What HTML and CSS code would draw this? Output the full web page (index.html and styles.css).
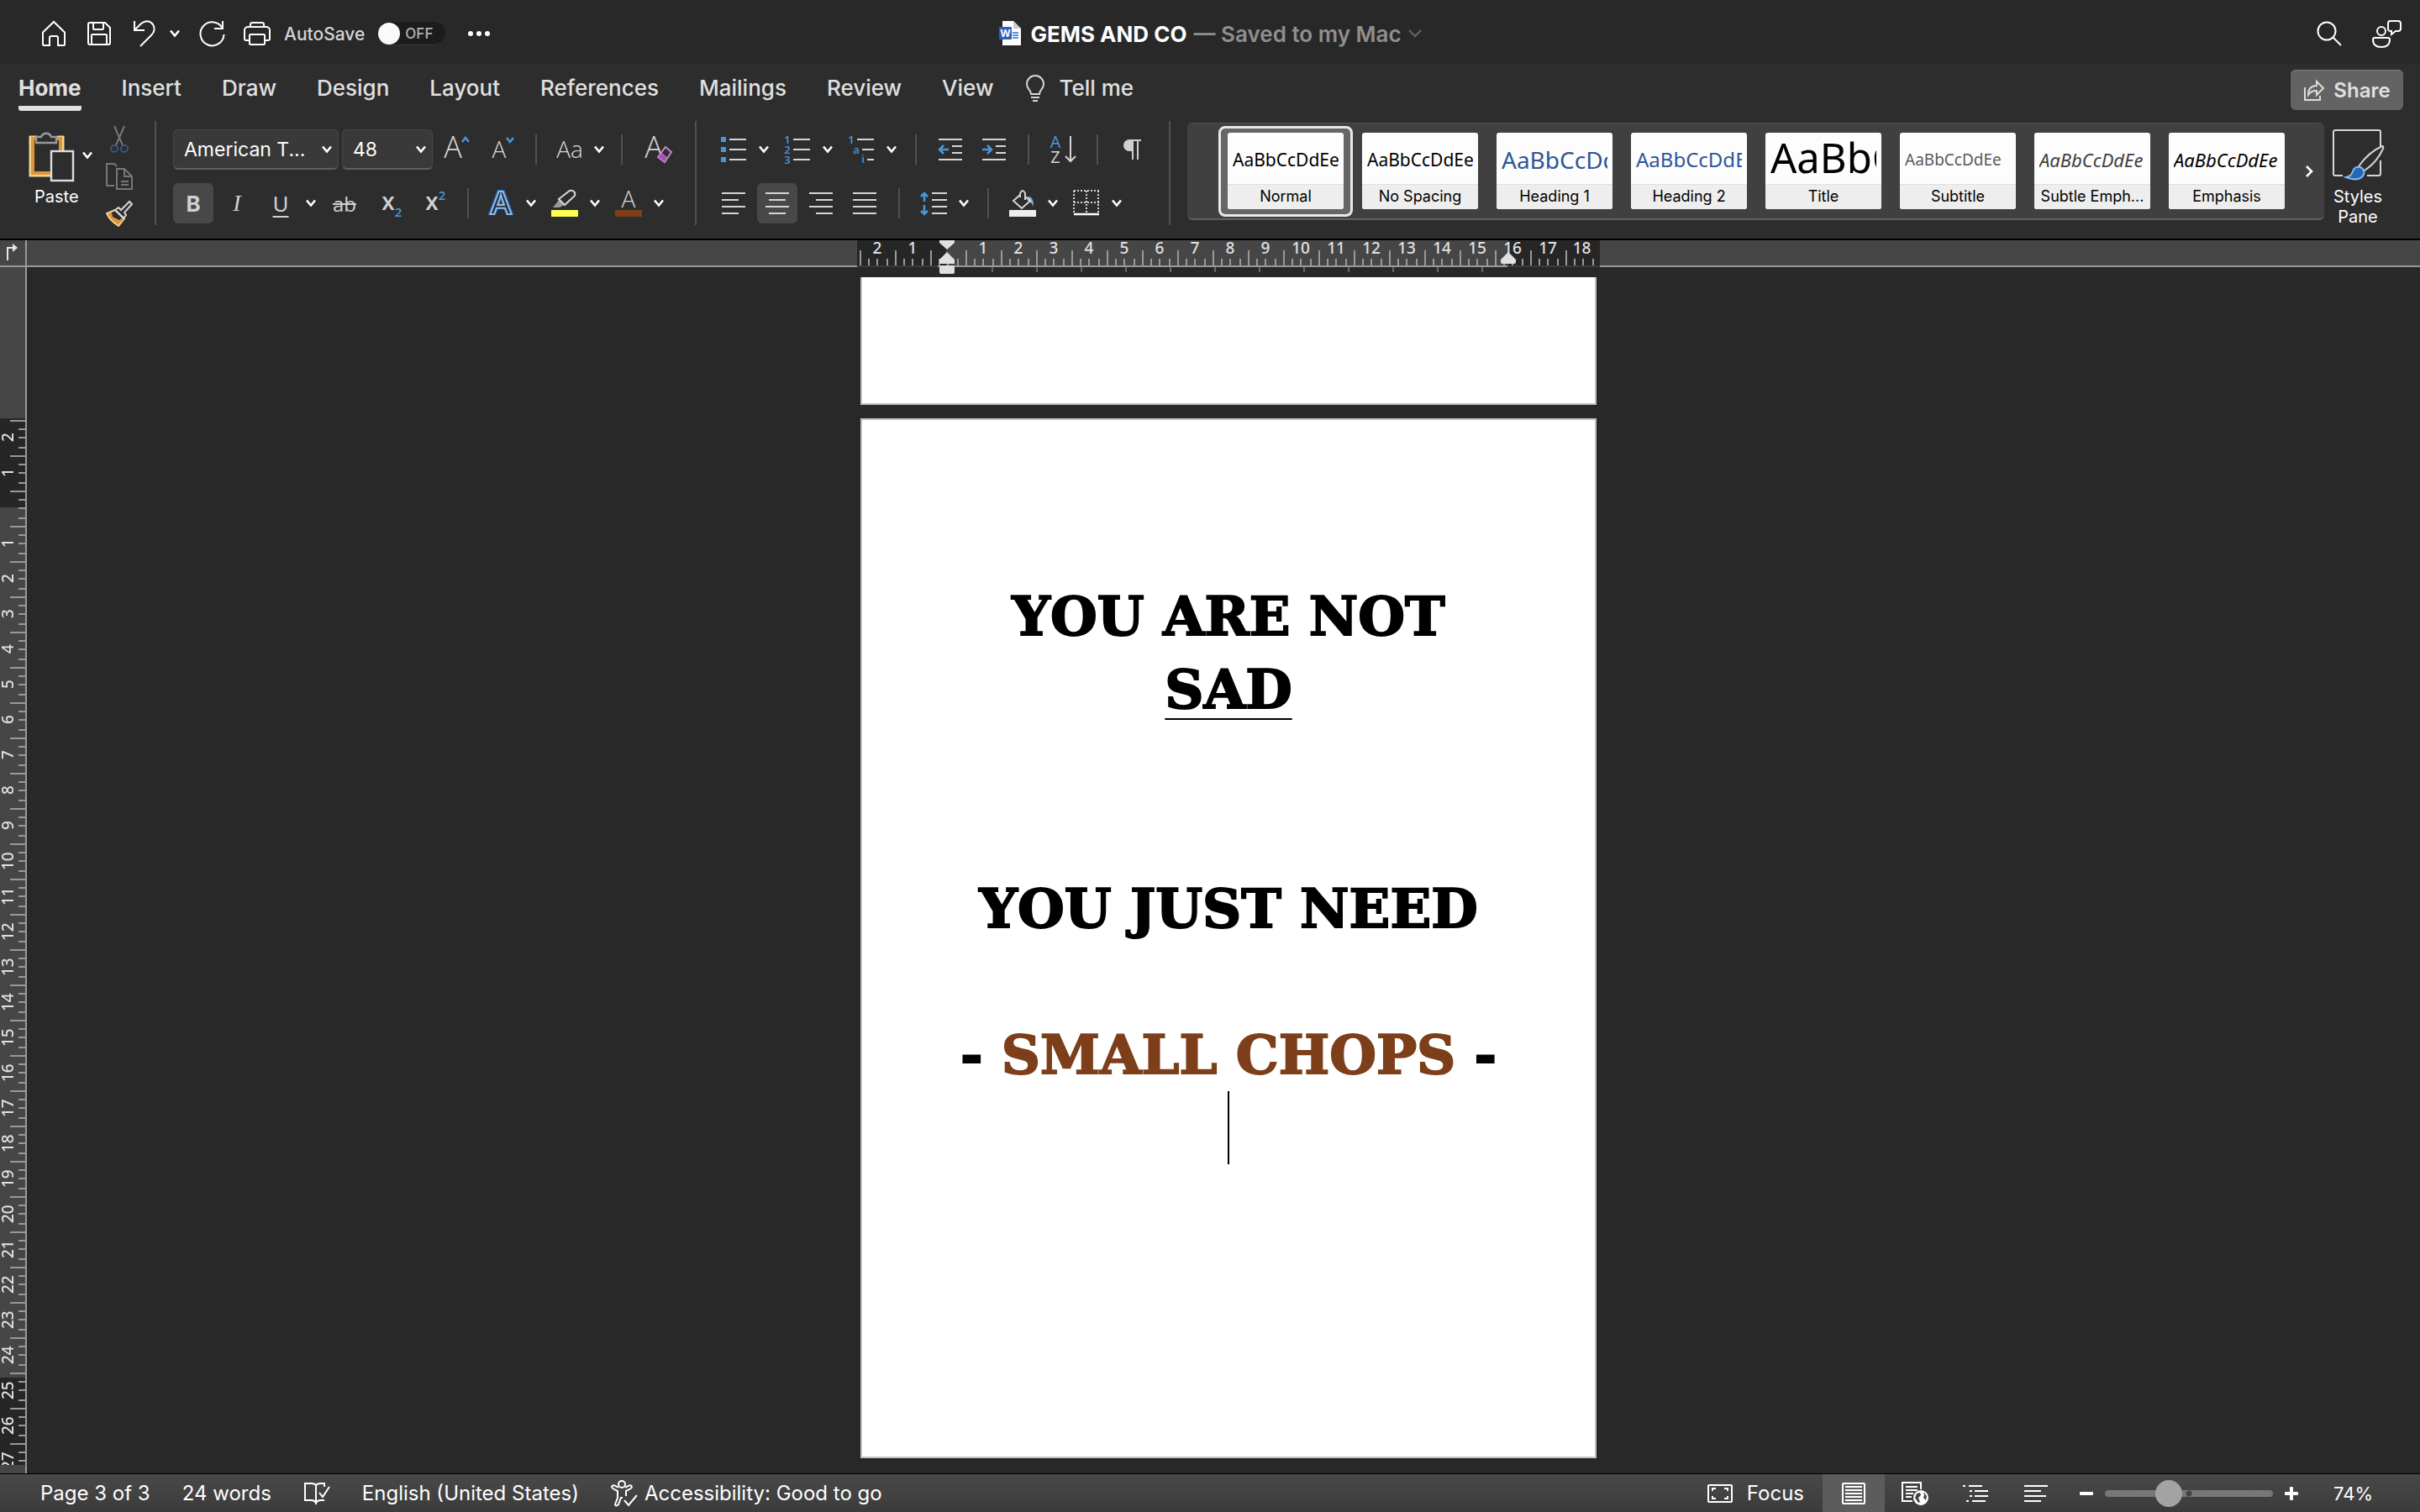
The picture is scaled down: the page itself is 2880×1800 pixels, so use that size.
FILE: index.html
```html
<!DOCTYPE html>
<html lang="en">
<head>
<meta charset="utf-8">
<title>GEMS AND CO</title>
<link rel="stylesheet" href="styles.css">
</head>
<body>
<svg class="defs" aria-hidden="true">
  <symbol id="chev" viewBox="0 0 12 12"><path d="M1 2.500L6 8.500L11 2.500" fill="none" stroke="currentColor" stroke-width="2.600"/></symbol>
</svg>

<header class="titlebar">
  <div class="quick">
    <button class="q" aria-label="Home"><svg width="32" height="32" viewBox="0 0 32 32" class="ln"><path d="M3 14.500L16 2L29 14.500V29a1 1 0 0 1-1 1H21V21a2 2 0 0 0-2-2h-6a2 2 0 0 0-2 2v9H4a1 1 0 0 1-1-1z"/></svg></button>
    <button class="q" aria-label="Save"><svg width="32" height="32" viewBox="0 0 32 32" class="ln"><path d="M5 3h18l6 6v18a2 2 0 0 1-2 2H5a2 2 0 0 1-2-2V5a2 2 0 0 1 2-2zM9 3v7a1 1 0 0 0 1 1h10a1 1 0 0 0 1-1V3M7 29V18a1 1 0 0 1 1-1h16a1 1 0 0 1 1 1v11"/></svg></button>
    <button class="q undo" aria-label="Undo"><svg width="32" height="32" viewBox="0 0 32 32" class="ln"><path d="M4 1v11h12M4 12L12 4q8-6 14 1q4 7-2 13L11 31"/></svg><svg width="12" height="12"><use href="#chev"/></svg></button>
    <button class="q" aria-label="Redo"><svg width="32" height="32" viewBox="0 0 32 32" class="ln"><path d="M29 1v9H19M29 10A14 14 0 1 0 30.500 17"/></svg></button>
    <button class="q" aria-label="Print"><svg width="32" height="32" viewBox="0 0 32 32" class="ln"><path d="M8 8V5a2 2 0 0 1 2-2h12a2 2 0 0 1 2 2v3M7 24H3a2 2 0 0 1-2-2V12a4 4 0 0 1 4-4h22a4 4 0 0 1 4 4v10a2 2 0 0 1-2 2h-4M7 18a1 1 0 0 1 1-1h16a1 1 0 0 1 1 1v10a1 1 0 0 1-1 1H8a1 1 0 0 1-1-1z"/></svg></button>
    <label class="autosave">AutoSave<span class="switch"><input type="checkbox" aria-label="AutoSave"><span>OFF</span></span></label>
    <button class="q more" aria-label="More"><svg width="28" height="8" viewBox="0 0 28 8" fill="#fff"><circle cx="4" cy="4" r="3"/><circle cx="14" cy="4" r="3"/><circle cx="24" cy="4" r="3"/></svg></button>
  </div>
  <button class="doc-title">
    <svg width="28" height="30" viewBox="0 0 28 30"><path d="M5 0h13l9 9v20H5z" fill="#fff"/><path d="M18 0v9h9z" fill="#ccc"/><path d="M17 14h7M17 17h7M17 20h7" stroke="#2b6fd0" stroke-width="1.500"/><rect x="1" y="7" width="15" height="15" rx="1" fill="#2c5fc0"/><text x="8.500" y="19" class="w-logo">W</text></svg>
    <strong>GEMS AND CO</strong><span>— Saved to my Mac</span><svg width="16" height="12" viewBox="0 0 16 12" fill="none" stroke="#666" stroke-width="2"><path d="M1 2l7 7 7-7"/></svg>
  </button>
  <div class="title-right">
    <button class="q" aria-label="Search"><svg width="32" height="32" viewBox="0 0 32 32" class="ln"><circle cx="13" cy="13" r="10.500"/><path d="M20.500 20.500L30 30"/></svg></button>
    <button class="q" aria-label="Presence"><svg width="36" height="34" viewBox="0 0 36 34" class="ln"><circle cx="12" cy="14" r="5"/><path d="M4 22h16a2 2 0 0 1 2 2c0 6-4 9-10 9S2 30 2 24a2 2 0 0 1 2-2zM22 2h10a3 3 0 0 1 3 3v6a3 3 0 0 1-3 3h-3l-5 4v-4a3 3 0 0 1-4-3V5a3 3 0 0 1 2-3z"/></svg></button>
  </div>
</header>

<nav class="tabs">
  <a href="#" class="active">Home</a><a href="#">Insert</a><a href="#">Draw</a><a href="#">Design</a><a href="#">Layout</a><a href="#">References</a><a href="#">Mailings</a><a href="#">Review</a><a href="#">View</a>
  <a href="#" class="tell"><svg width="24" height="32" viewBox="0 0 24 32" fill="none" stroke="#d6d6d6" stroke-width="2"><path d="M7 23c0-5-5-6-5-12a10 10 0 0 1 20 0c0 6-5 7-5 12zM7 27h10M9 31h6"/></svg>Tell me</a>
  <button class="share"><svg width="26" height="26" viewBox="0 0 26 26" fill="none" stroke="#dcdcdc" stroke-width="2"><path d="M2 9v15h18v-5M6 18c0-8 4-11 10-11V2l8 8-8 8v-5c-5 0-7 1-10 5z"/></svg>Share</button>
</nav>

<section class="ribbon">
  <div class="clip">
    <button class="paste"><span class="paste-icon"><svg width="54" height="62" viewBox="0 0 54 62"><path d="M10 9H2v46h24M34 9h7v16" fill="none" stroke="#f3d58f" stroke-width="3"/><path d="M10 11H5v41h21M34 11h4v14" fill="none" stroke="#de9439" stroke-width="4"/><path d="M9 16V9h6a6.500 7 0 0 1 12 0h6v7z" fill="#2d2d2d" stroke="#999" stroke-width="2.400"/><rect x="27" y="26" width="26" height="35" fill="#2d2d2d" stroke="#ddd" stroke-width="2.400"/></svg><svg width="12" height="12"><use href="#chev"/></svg></span><span class="paste-label">Paste</span></button>
    <div class="clip-col">
      <button class="mini" aria-label="Cut"><svg width="32" height="32" viewBox="0 0 32 32" fill="none" stroke-width="2"><path d="M10 0L20 23M22 0L12 23" stroke="#777"/><circle cx="10" cy="27" r="4" stroke="#355a7c"/><circle cx="22" cy="27" r="4" stroke="#355a7c"/></svg></button>
      <button class="mini" aria-label="Copy"><svg width="32" height="32" viewBox="0 0 32 32" fill="none" stroke="#777" stroke-width="2"><path d="M10 27H1V1h9l3 3M13 7h9l9 9v15H13zM22 7v9h9M18 22h9M18 26h9"/></svg></button>
      <button class="mini" aria-label="Format painter"><svg width="32" height="32" viewBox="0 0 32 32" fill="none" stroke-width="2"><path d="M8 20l8 4 5-4-6 11Q4 24 1 16l6-1z" fill="#de9439"/><path d="M11 12l11 10-7 9Q4 24 1 16z" stroke="#f3d58f"/><path d="M11 12l4-3 3 3L28 2l3 3-9 10 2 3-3 4z" stroke="#d6d6d6"/></svg></button>
    </div>
  </div>
  <div class="divider"></div>

  <div class="group font">
    <div class="row">
      <span class="combo family"><select aria-label="Font"><option>American T...</option></select><svg width="12" height="12"><use href="#chev"/></svg></span>
      <span class="combo size"><select aria-label="Font size"><option>48</option></select><svg width="12" height="12"><use href="#chev"/></svg></span>
      <button class="tool" aria-label="Grow font"><svg width="32" height="32" viewBox="0 0 32 32"><text x="12" y="26" class="glyph big">A</text><path d="M23 7l4-5 4 5" class="b"/></svg></button>
      <button class="tool spaced" aria-label="Shrink font"><svg width="32" height="32" viewBox="0 0 32 32"><text x="11" y="26" class="glyph mid">A</text><path d="M20 2l4 5 4-5" class="b"/></svg></button>
      <i class="rule"></i>
      <button class="menu" aria-label="Change case"><svg width="32" height="32" viewBox="0 0 32 32"><text x="17" y="26" class="glyph mid">Aa</text></svg><svg width="12" height="12"><use href="#chev"/></svg></button>
      <i class="rule"></i>
      <button class="tool spaced" aria-label="Clear formatting"><svg width="32" height="32" viewBox="0 0 32 32"><text x="11" y="26" class="glyph big">A</text><path d="M25 13l7 6-8 12-8-6z" fill="#2d2d2d" stroke="#c586d4" stroke-width="2"/><path d="M20 20l7 6-3 5-8-6z" fill="#a54fb8" stroke="#c586d4"/></svg></button>
    </div>
    <div class="row">
      <button class="tool on bold" aria-pressed="true">B</button>
      <button class="tool italic">I</button>
      <button class="menu"><span class="ul">U</span><svg width="12" height="12"><use href="#chev"/></svg></button>
      <button class="tool strike">ab</button>
      <button class="tool spaced" aria-label="Subscript"><svg width="32" height="32" viewBox="0 0 32 32"><text x="12" y="24" class="xx">x</text><text x="24" y="32" class="blue">2</text></svg></button>
      <button class="tool" aria-label="Superscript"><svg width="32" height="32" viewBox="0 0 32 32"><text x="12" y="24" class="xx">x</text><text x="24" y="12" class="blue">2</text></svg></button>
      <i class="rule"></i>
      <button class="menu" aria-label="Text effects"><svg width="32" height="32" viewBox="0 0 32 32"><text x="16" y="29" class="fx">A</text></svg><svg width="12" height="12"><use href="#chev"/></svg></button>
      <button class="menu" aria-label="Highlight"><svg width="32" height="32" viewBox="0 0 32 32"><path d="M2 21l7-9 6 6-5 3z" fill="#999"/><path d="M9 11L22 1q3-1 5 1t1 5L16 18z" fill="none" stroke="#d6d6d6" stroke-width="2"/><path d="M0 24h32v8H0z" fill="#ffff4f"/></svg><svg width="12" height="12"><use href="#chev"/></svg></button>
      <button class="menu" aria-label="Font color"><svg width="32" height="32" viewBox="0 0 32 32"><text x="16" y="21" class="glyph mid">A</text><path d="M0 24h32v8H0z" fill="#7d3f1a"/></svg><svg width="12" height="12"><use href="#chev"/></svg></button>
    </div>
  </div>
  <div class="divider"></div>

  <div class="group">
    <div class="row">
      <button class="menu" aria-label="Bullets"><svg width="32" height="32" viewBox="0 0 32 32"><path d="M1 1h6v6H1zM1 13h6v6H1zM1 25h6v6H1z" fill="#4a97d8"/><path d="M11 4h20M11 16h20M11 28h20" class="g"/></svg><svg width="12" height="12"><use href="#chev"/></svg></button>
      <button class="menu" aria-label="Numbering"><svg width="32" height="32" viewBox="0 0 32 32"><text x="4" y="9" class="num">1</text><text x="4" y="21" class="num">2</text><text x="4" y="33" class="num">3</text><path d="M11 4h20M11 16h20M11 28h20" class="g"/></svg><svg width="12" height="12"><use href="#chev"/></svg></button>
      <button class="menu" aria-label="Multilevel list"><svg width="32" height="32" viewBox="0 0 32 32"><text x="4" y="9" class="num">1</text><text x="10" y="21" class="num">a</text><text x="18" y="32" class="num">i</text><path d="M11 4h20M17 16h14M23 28h8" class="g"/></svg><svg width="12" height="12"><use href="#chev"/></svg></button>
      <i class="rule"></i>
      <button class="tool" aria-label="Decrease indent"><svg width="32" height="32" viewBox="0 0 32 32"><path d="M2 4h28M18 12h12M18 20h12M2 28h28" class="g"/><path d="M14 16H3M8 11l-5 5 5 5" class="b"/></svg></button>
      <button class="tool" aria-label="Increase indent"><svg width="32" height="32" viewBox="0 0 32 32"><path d="M2 4h28M18 12h12M18 20h12M2 28h28" class="g"/><path d="M2 16h11M8 11l5 5-5 5" class="b"/></svg></button>
      <i class="rule"></i>
      <button class="tool" aria-label="Sort"><svg width="34" height="34" viewBox="0 0 34 34"><text x="8" y="15" class="sort sa">A</text><text x="8" y="33" class="sort">Z</text><path d="M26 1v30M20 25l6 6 6-6" class="g"/></svg></button>
      <i class="rule"></i>
      <button class="tool" aria-label="Show formatting marks"><svg width="32" height="32" viewBox="0 0 32 32"><path d="M13 4h14v2h-3v22h-2V6h-4v22h-2V18h-3a7 7 0 0 1 0-14z" fill="#d0d0d0"/></svg></button>
    </div>
    <div class="row">
      <button class="tool" aria-label="Align left"><svg width="32" height="32" viewBox="0 0 32 32"><path d="M2 4h28M2 12h20M2 20h28M2 28h20" class="g"/></svg></button>
      <button class="tool on" aria-label="Center"><svg width="32" height="32" viewBox="0 0 32 32"><path d="M2 4h28M6 12h20M2 20h28M6 28h20" class="g"/></svg></button>
      <button class="tool" aria-label="Align right"><svg width="32" height="32" viewBox="0 0 32 32"><path d="M2 4h28M10 12h20M2 20h28M10 28h20" class="g"/></svg></button>
      <button class="tool" aria-label="Justify"><svg width="32" height="32" viewBox="0 0 32 32"><path d="M2 4h28M2 12h28M2 20h28M2 28h28" class="g"/></svg></button>
      <i class="rule"></i>
      <button class="menu" aria-label="Line spacing"><svg width="32" height="32" viewBox="0 0 32 32"><path d="M14 4h18M14 12h18M14 20h18M14 28h18" class="g"/><path d="M5 14V3M1 8l4-4 4 4M5 18v11M1 25l4 4 4-4" class="b"/></svg><svg width="12" height="12"><use href="#chev"/></svg></button>
      <i class="rule"></i>
      <button class="menu" aria-label="Shading"><svg width="32" height="32" viewBox="0 0 32 32"><path d="M22 8q7-1 7 12q-2-5-7-7z" fill="#7fb2e6"/><path d="M13 6L5 13l10 9 10-9-6-5M13 9V4q3-6 6 0v8" fill="none" stroke="#d6d6d6" stroke-width="2"/><path d="M0 24h32v8H0z" fill="#eee"/></svg><svg width="12" height="12"><use href="#chev"/></svg></button>
      <button class="menu" aria-label="Borders"><svg width="32" height="32" viewBox="0 0 32 32"><path d="M1 1h30M1 15h30M1 1v26M16 1v26M30 1v26" stroke="#d6d6d6" stroke-width="2" stroke-dasharray="2 2" fill="none"/><path d="M1 29h30" stroke="#fff" stroke-width="2.500"/></svg><svg width="12" height="12"><use href="#chev"/></svg></button>
    </div>
  </div>
  <div class="divider"></div>

  <div class="gallery">
    <button class="style selected"><span class="card"><span class="sample">AaBbCcDdEe</span><span class="name">Normal</span></span></button>
    <button class="style"><span class="card"><span class="sample">AaBbCcDdEe</span><span class="name">No Spacing</span></span></button>
    <button class="style"><span class="card"><span class="sample h1">AaBbCcDdEe</span><span class="name">Heading 1</span></span></button>
    <button class="style"><span class="card"><span class="sample h2">AaBbCcDdEe</span><span class="name">Heading 2</span></span></button>
    <button class="style"><span class="card"><span class="sample title">AaBbCcDdEe</span><span class="name">Title</span></span></button>
    <button class="style"><span class="card"><span class="sample subtitle">AaBbCcDdEe</span><span class="name">Subtitle</span></span></button>
    <button class="style"><span class="card"><span class="sample em soft">AaBbCcDdEe</span><span class="name">Subtle Emph...</span></span></button>
    <button class="style"><span class="card"><span class="sample em">AaBbCcDdEe</span><span class="name">Emphasis</span></span></button>
    <button class="next" aria-label="More styles"><svg width="10" height="14" viewBox="0 0 10 14" fill="none" stroke="#fff" stroke-width="2.600"><path d="M2 1l6 6-6 6"/></svg></button>
  </div>
  <button class="pane"><svg width="62" height="62" viewBox="0 0 62 62" fill="none" stroke="#d6d6d6" stroke-width="2"><path d="M13 56H4a2 2 0 0 1-2-2V4a2 2 0 0 1 2-2h52a2 2 0 0 1 2 2v17M58 38v16a2 2 0 0 1-2 2H42"/><path d="M32 45Q44 28 60 21q2 0 1 3Q54 40 39 50"/><path d="M17 58q6-1 8-7t9-5q6 3 4 9-5 9-21 3z" fill="#2566b8" stroke="#8abcec"/></svg><span>Styles<br>Pane</span></button>
</section>

<div class="hruler">
  <div class="corner"><svg width="14" height="20" viewBox="0 0 14 20"><path d="M1 20V5h8" fill="none" stroke="#e6e6e6" stroke-width="2"/><path d="M7 0l6 5-6 5z" fill="#e6e6e6"/></svg></div>
  <div class="htrack">
    <div class="hscale">
      <span>2</span><span>1</span><span></span><span>1</span><span>2</span><span>3</span><span>4</span><span>5</span><span>6</span><span>7</span><span>8</span><span>9</span><span>10</span><span>11</span><span>12</span><span>13</span><span>14</span><span>15</span><span>16</span><span>17</span><span>18</span>
      <svg class="indent" width="20" height="40" viewBox="0 0 20 40" fill="#e0e0e0"><path d="M1 0h18v3l-9 8-9-8zM10 14l9 9v5H1v-5z"/><rect x="1" y="30" width="18" height="10" rx="2"/></svg>
      <svg class="indent right" width="20" height="40" viewBox="0 0 20 40" fill="#e0e0e0"><path d="M10 14l9 9v3q0 2-2 2H3q-2 0-2-2v-3z"/></svg>
      <i class="stops"></i>
    </div>
  </div>
</div>

<main class="work">
  <div class="vruler">
    <div class="vscale">
      <span>2</span><span>1</span><span></span><span>1</span><span>2</span><span>3</span><span>4</span><span>5</span><span>6</span><span>7</span><span>8</span><span>9</span><span>10</span><span>11</span><span>12</span><span>13</span><span>14</span><span>15</span><span>16</span><span>17</span><span>18</span><span>19</span><span>20</span><span>21</span><span>22</span><span>23</span><span>24</span><span>25</span><span>26</span><span>27</span>
    </div>
  </div>
  <div class="canvas">
    <div class="page tail"></div>
    <article class="page body">
      <p><br></p>
      <p>YOU ARE NOT</p>
      <p><u>SAD</u></p>
      <p><br></p>
      <p><br></p>
      <p>YOU JUST NEED</p>
      <p><br></p>
      <p>- <span class="brown">SMALL CHOPS</span> -</p>
      <p class="caret-line"><span class="caret"></span></p>
    </article>
  </div>
</main>

<footer class="status">
  <button>Page 3 of 3</button>
  <button>24 words</button>
  <button aria-label="Proofing"><svg width="32" height="28" viewBox="0 0 32 28" class="ln"><path d="M15 27V4q-2-2-5-2H2v20h8q3 0 5 3 2-3 5-3h5M15 4q2-2 5-2h5v4M19 13l4 5 8-12"/></svg></button>
  <button>English (United States)</button>
  <button class="acc"><svg width="32" height="32" viewBox="0 0 32 32" class="ln"><circle cx="13" cy="5" r="4"/><path d="M9 9Q2 4 1 8q0 2 7 5v8l-3 8q1 3 4 0l3-8h2M17 9q7-5 8-1 0 2-7 5v6M16 24l5 6L31 18"/></svg>Accessibility: Good to go</button>
  <span class="grow"></span>
  <button class="focus"><svg width="32" height="24" viewBox="0 0 32 24" class="ln"><rect x="2" y="2" width="28" height="20" rx="1"/><path d="M7 9V6h4M21 6h4v3M25 15v3h-4M11 18H7v-3"/></svg>Focus</button>
  <div class="views">
    <button class="view current" aria-label="Print layout"><svg width="30" height="28" viewBox="0 0 30 28" class="ln"><rect x="2" y="2" width="26" height="24" rx="1"/><path d="M5 6h20M5 10h20M5 14h20M5 18h20M5 22h20"/></svg></button>
    <button class="view" aria-label="Web layout"><svg width="34" height="30" viewBox="0 0 34 30" class="ln"><path d="M14 24H2V2h22v8M6 7h14M6 11h14M6 15h9M6 19h7"/><circle cx="24" cy="20" r="9" fill="#fff" stroke="none"/><path d="M19 15l4-1 1 3-3 3 2 5-2 1-4-6zM27 13l4 5-1 5-3-3 1-3z" fill="#444" stroke="none"/></svg></button>
    <button class="view" aria-label="Outline"><svg width="32" height="24" viewBox="0 0 32 24" class="ln"><path d="M1 3h3M8 3h16M9 9h3M15 9h16M9 15h3M15 15h16M5 21h3M12 21h16"/></svg></button>
    <button class="view" aria-label="Draft"><svg width="30" height="24" viewBox="0 0 30 24" class="ln"><path d="M1 3h28M1 9h20M1 15h26M1 21h20"/></svg></button>
  </div>
  <div class="zoom">
    <button aria-label="Zoom out"><svg width="16" height="16" viewBox="0 0 16 16" fill="#fff"><rect y="6" width="16" height="4" rx="1"/></svg></button>
    <input type="range" min="0" max="100" value="36" aria-label="Zoom">
    <button aria-label="Zoom in"><svg width="16" height="16" viewBox="0 0 16 16" fill="#fff"><rect y="6" width="16" height="4" rx="1"/><rect x="6" width="4" height="16" rx="1"/></svg></button>
  </div>
  <button class="pct">74%</button>
</footer>
</body>
</html>
```
FILE: styles.css
```css
* { box-sizing: border-box; }

body {
  margin: 0;
  height: 100vh;
  display: flex;
  flex-direction: column;
  overflow: hidden;
  background: #282828;
  color: #e0e0e0;
  font-family: Inter, "Liberation Sans", sans-serif;
  font-size: 22px;
}

button, select {
  font: inherit;
  color: inherit;
  background: none;
  border: 0;
  padding: 0;
}

button {
  display: inline-flex;
  align-items: center;
  justify-content: center;
  white-space: nowrap;
}

a { color: inherit; text-decoration: none; }
svg { flex: none; display: block; overflow: visible; }
.defs { position: absolute; width: 0; height: 0; }
.ln { fill: none; stroke: #fff; stroke-width: 2; }
.g { fill: none; stroke: #d6d6d6; stroke-width: 2; }
.b { fill: none; stroke: #4a97d8; stroke-width: 2.5; }

/* Title bar */
.titlebar {
  display: grid;
  grid-template-columns: 1fr auto 1fr;
  align-items: center;
  height: 76px;
  padding: 4px 22px 0;
}
.quick { display: flex; align-items: center; gap: 22px; padding-left: 26px; }
.undo { color: #fff; gap: 14px; }
.autosave {
  display: flex;
  align-items: center;
  gap: 16px;
  margin-left: -6px;
  font-size: 21px;
  font-weight: 500;
  color: #d4d4d4;
}
.switch {
  display: flex;
  align-items: center;
  gap: 6px;
  width: 80px;
  height: 28px;
  border-radius: 14px;
  background: #1c1c1c;
  border-bottom: 1px solid #3a3a3a;
  font-size: 17px;
  color: #b4b4b4;
}
.switch input {
  appearance: none;
  width: 26px;
  height: 26px;
  margin: 0;
  border-radius: 13px;
  background: #fafafa;
}
.more { margin-left: 4px; }
.doc-title { gap: 8px; font-size: 26px; font-weight: 600; color: #8f8f8f; }
.doc-title svg:first-child { margin-right: 2px; }
.doc-title strong { font-weight: 700; color: #fff; }
.w-logo { font: 700 12px Inter, sans-serif; fill: #fff; text-anchor: middle; }
.title-right { display: flex; justify-content: flex-end; gap: 34px; }

/* Tabs */
.tabs {
  display: flex;
  align-items: center;
  gap: 48px;
  height: 62px;
  padding: 0 20px 0 22px;
  background: #2d2d2d;
  font-size: 26px;
  font-weight: 500;
}
.tabs a { height: 50px; line-height: 46px; }
.tabs a.active { font-weight: 700; border-bottom: 6px solid #e0e0e0; border-radius: 3px; }
.tabs a.tell { display: flex; align-items: center; gap: 16px; margin-left: -10px; padding-bottom: 4px; }
.share {
  gap: 10px;
  width: 134px;
  height: 48px;
  margin-left: auto;
  border-radius: 6px;
  background: #636363;
  border-top: 1px solid #7c7c7c;
  font-size: 24px;
  font-weight: 600;
}

/* Ribbon */
.ribbon {
  display: flex;
  align-items: flex-start;
  gap: 20px;
  height: 148px;
  padding: 6px 34px 0 0;
  background: #2d2d2d;
  border-bottom: 2px solid #000;
  color: #fff;
}
.divider { width: 2px; height: 124px; background: #505050; }
.clip { display: flex; align-items: flex-start; width: 164px; padding-left: 34px; gap: 16px; }
.paste { flex-direction: column; align-items: flex-start; gap: 6px; width: 76px; padding-top: 10px; font-size: 20px; }
.paste-icon { display: flex; align-items: center; gap: 10px; }
.paste-label { padding-left: 7px; line-height: 24px; }
.clip-col { display: flex; flex-direction: column; gap: 12px; padding-top: 6px; }
.group { display: flex; flex-direction: column; gap: 16px; padding-top: 10px; }
.row { display: flex; align-items: center; gap: 4px; height: 48px; }
.rule { width: 2px; height: 36px; margin: 0 12px; background: #505050; }
.font .rule { margin: 0 10px; }
.combo { display: grid; align-items: center; }
.combo > * { grid-area: 1 / 1; }
.combo svg { justify-self: end; margin-right: 8px; }
.family { width: 197px; }
.size { width: 108px; }
.combo select {
  appearance: none;
  width: 100%;
  height: 48px;
  padding: 0 12px;
  border-radius: 6px;
  background: #393939;
  border: 1px solid #464646;
  border-bottom: 2px solid #606060;
  font-size: 23px;
}
.tool { width: 48px; height: 48px; border-radius: 6px; color: #d0d0d0; }
.tool.on { background: #484848; }
.menu { width: 72px; height: 48px; padding-right: 6px; padding-left: 8px; gap: 14px; }
.spaced { margin-left: 4px; }
.bold { font-size: 26px; font-weight: 700; }
.italic { font: italic 28px "Liberation Serif", serif; }
.ul { width: 32px; font: 400 26px/30px "Noto Sans", sans-serif; color: #d0d0d0; text-decoration: underline 2px; text-underline-offset: 5px; }
.strike { font: 400 24px "Open Sans", sans-serif; text-decoration: line-through 2px; }
svg text { text-anchor: middle; }
.glyph { font: 300 26px "Open Sans", sans-serif; fill: #d6d6d6; }
.glyph.big { font-size: 36px; }
.glyph.mid { font-size: 28px; }
.xx { font: 600 28px "Open Sans", sans-serif; fill: #d0d0d0; }
.blue { font: 600 15px "Open Sans", sans-serif; fill: #4a97d8; }
.fx {
  font: 600 38px "Open Sans", sans-serif;
  fill: #2d2d2d;
  stroke: #8abcec;
  stroke-width: 2;
  filter: drop-shadow(1px 0 0 #2566b8) drop-shadow(-1px 0 0 #2566b8) drop-shadow(0 -1px 0 #2566b8);
}
.num { font: 600 13px "Open Sans", sans-serif; fill: #4a97d8; }
.sort { font: 400 20px "Open Sans", sans-serif; fill: #d6d6d6; }
.sort.sa { fill: #4a97d8; }

/* Style gallery */
.gallery {
  flex: 1;
  display: flex;
  align-items: center;
  min-width: 0;
  height: 116px;
  margin: 2px 0 0;
  padding-left: 37px;
  border-radius: 6px;
  background: #404040;
  border-top: 1px solid #505050;
  border-bottom: 2px solid #606060;
}
.style { width: 160px; height: 108px; border: 3px solid transparent; border-radius: 8px; flex: none; }
.style.selected { background: #666; border-color: #e8e8e8; }
.card {
  display: flex;
  flex-direction: column;
  width: 138px;
  height: 91px;
  border-radius: 3px;
  overflow: hidden;
  background: #fdfdfd;
  color: #000;
}
.sample {
  height: 61px;
  margin: 0 6px;
  overflow: hidden;
  text-align: left;
  font: 400 21px/64px "Noto Sans", sans-serif;
}
.sample.h1 { font-size: 28px; color: #2f5597; }
.sample.h2 { font-size: 24px; color: #2f5597; }
.sample.title { font-size: 49px; line-height: 58px; }
.sample.subtitle { font-size: 19px; color: #5a5a5a; }
.sample.em { font-size: 22px; font-style: italic; }
.sample.soft { color: #404040; }
.name { height: 30px; line-height: 28px; border-top: 1px solid #e0e0e0; background: #eee; font-size: 18px; }
.next { flex: 1; height: 60px; }
.pane { flex-direction: column; width: 80px; margin-left: -20px; padding-top: 9px; gap: 7px; font-size: 20px; line-height: 24px; }

/* Rulers */
.hruler { display: flex; height: 32px; background: #464646; }
.corner { width: 32px; padding: 4px 8px; border-right: 2px solid #999; border-bottom: 2px solid #999; }
.htrack {
  flex: 1;
  display: flex;
  justify-content: center;
  padding-left: 12px;
  background: linear-gradient(#999, #999) bottom / 100% 2px no-repeat;
}
.hscale {
  position: relative;
  display: flex;
  width: 884px;
  padding-left: 3px;
  background:
    linear-gradient(90deg, #3a3a3a 96px, #999 96px 774px, #3a3a3a 774px) bottom / 100% 2px no-repeat,
    linear-gradient(90deg, #262626 106px, #464646 106px 775px, #262626 775px);
}
.hscale span {
  flex: none;
  width: 42px;
  height: 30px;
  text-align: center;
  font: 500 19px/18px "Noto Sans", sans-serif;
  background:
    linear-gradient(#999, #999) 0 100% / 2px 18px no-repeat,
    linear-gradient(#999, #999) 10px 100% / 2px 8px no-repeat,
    linear-gradient(#999, #999) 20px 100% / 2px 8px no-repeat,
    linear-gradient(#999, #999) 32px 100% / 2px 8px no-repeat;
}
.hscale span:last-of-type { width: 39px; }
.indent { position: absolute; top: 0; left: 97px; z-index: 1; }
.indent.right { left: 765px; }
.stops {
  position: absolute;
  top: 32px;
  left: 160px;
  width: 600px;
  height: 6px;
  background: repeating-linear-gradient(90deg, #666 0 2px, transparent 2px 53px);
}
.work { flex: 1; display: flex; min-height: 0; }
.vruler { width: 32px; padding-top: 180px; background: #464646; border-right: 2px solid #999; overflow: hidden; }
.vscale {
  height: 1246px;
  width: 30px;
  padding-top: 2px;
  overflow: hidden;
  background: linear-gradient(#262626 106px, #464646 106px 1142px, #262626 1142px);
}
.vscale span {
  display: flex;
  justify-content: center;
  width: 30px;
  height: 42px;
  padding-left: 11px;
  writing-mode: vertical-rl;
  transform: rotate(180deg);
  font: 500 19px/18px "Noto Sans", sans-serif;
  background:
    linear-gradient(#999, #999) 0 40px / 18px 2px no-repeat,
    linear-gradient(#999, #999) 0 30px / 8px 2px no-repeat,
    linear-gradient(#999, #999) 0 20px / 8px 2px no-repeat,
    linear-gradient(#999, #999) 0 8px / 8px 2px no-repeat;
}

/* Document */
.canvas {
  flex: 1;
  display: flex;
  flex-direction: column;
  align-items: center;
  gap: 16px;
  padding: 12px 0 18px 12px;
}
.page { width: 876px; background: #fff; border: 2px solid #c3c3c3; }
.tail { height: 152px; border-top: 0; }
.body {
  flex: 1;
  padding-top: 103px;
  color: #000;
  font: 700 64px/87px "DejaVu Serif", serif;
  text-align: center;
  -webkit-text-stroke: 2px currentColor;
}
.body p { margin: 0; }
.body u { text-decoration-thickness: 2px; text-underline-offset: 12px; text-decoration-skip-ink: none; }
.brown { color: #7d3f1a; }
.caret { display: block; width: 2px; height: 87px; margin: 0 auto; background: #000; }

/* Status bar */
.status {
  display: flex;
  align-items: center;
  height: 46px;
  padding-left: 48px;
  padding-right: 56px;
  gap: 38px;
  border-top: 1px solid #000;
  background: linear-gradient(#494949, #3b3b3b);
  color: #fff;
  font-size: 24px;
}
.acc { gap: 8px; }
.grow { flex: 1; }
.focus { gap: 16px; margin-right: -16px; }
.views { display: flex; }
.view { width: 72px; height: 45px; }
.current { width: 74px; background: #5c5c5c; }
.zoom { display: flex; align-items: center; gap: 14px; margin-left: -22px; margin-right: 4px; }
.zoom input {
  appearance: none;
  width: 200px;
  height: 8px;
  margin: 0;
  border-radius: 4px;
  background: radial-gradient(circle at 50% 50%, #444 3px, transparent 4px), #777;
}
.zoom input::-webkit-slider-thumb {
  appearance: none;
  width: 32px;
  height: 32px;
  border-radius: 16px;
  background: #a3a3a3;
}
.pct { font-size: 22px; }
```
